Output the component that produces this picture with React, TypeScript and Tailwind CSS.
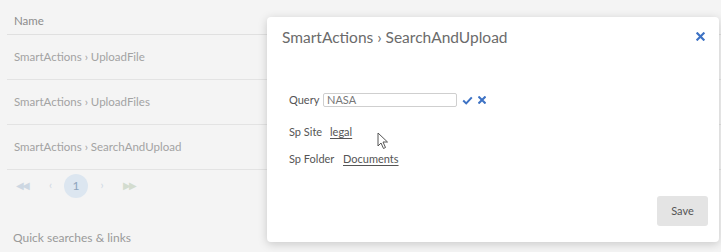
import React from "react";

function Row({ name }: { name: string }) {
  return (
    <div className="h-[45px] border-b border-[#e3e3e3] flex items-center pl-[7px] text-[11.5px] text-[#a3a3a3]">
      {name}
    </div>
  );
}

export default function App() {
  return (
    <div
      className="relative w-[721px] h-[252px] overflow-hidden bg-[#f4f4f4]"
      style={{ fontFamily: "Lato, 'Noto Sans', sans-serif" }}
    >
      {/* Background page */}
      <div className="pl-[7px] pr-0">
        <div className="h-[35px] border-b border-[#e0e0e0] flex items-end pb-[5px] pl-[7px] text-[11.5px] text-[#8c8c8c] relative">
          <span>Name</span>
          <span className="absolute left-[397px] top-[13px] text-[#8c8c8c]">Application</span>
        </div>
        <Row name="SmartActions › UploadFile" />
        <Row name="SmartActions › UploadFiles" />
        <Row name="SmartActions › SearchAndUpload" />
        <div className="flex items-center h-[31px] pl-[0px] text-[#cdd7e2]">
          <span className="w-[30px] text-center text-[10px] tracking-[-2px]">◀◀</span>
          <span className="w-[27px] text-center text-[11px]">‹</span>
          <span className="w-[24px] h-[24px] rounded-full bg-[#dce6f0] text-[#8ea4bd] text-[12px] flex items-center justify-center">1</span>
          <span className="w-[28px] text-center text-[11px]">›</span>
          <span className="w-[26px] text-center text-[10px] tracking-[-2px] text-[#d3dccf]">▶▶</span>
        </div>
        <div className="mt-[28px] pl-[6px] text-[12px] text-[#9a9a9a]">Quick searches &amp; links</div>
      </div>

      {/* Modal */}
      <div className="absolute left-[267px] top-[17px] w-[452px] h-[225px] bg-white rounded-[4px] shadow-[0_2px_10px_rgba(0,0,0,0.18)] flex flex-col">
        <div className="flex items-start justify-between pl-[15px] pr-[14px] pt-[9px]">
          <div className="text-[15.5px] text-[#6b6b6b]">SmartActions › SearchAndUpload</div>
          <svg width="9" height="9" viewBox="0 0 10 10" className="mt-[6px]">
            <path d="M1.5 1.5 L8.5 8.5 M8.5 1.5 L1.5 8.5" stroke="#3d72c4" strokeWidth="2.4" strokeLinecap="square" />
          </svg>
        </div>
        <div className="pl-[22px] mt-[44px] flex flex-col text-[11px] text-[#555]">
          <div className="flex items-center h-[14px]">
            <span className="w-[34px]">Query</span>
            <div className="w-[134px] h-[14px] border border-[#cfcfcf] rounded-[2px] flex items-center pl-[3px] text-[11px] text-[#777]">NASA</div>
            <svg width="11" height="9" viewBox="0 0 11 9" className="ml-[5px]">
              <path d="M1.2 4.6 L4.2 7.4 L9.8 1.4" stroke="#3d72c4" strokeWidth="2" fill="none" />
            </svg>
            <svg width="8" height="8" viewBox="0 0 10 10" className="ml-[5px]">
              <path d="M1.5 1.5 L8.5 8.5 M8.5 1.5 L1.5 8.5" stroke="#3d72c4" strokeWidth="2.6" strokeLinecap="square" />
            </svg>
          </div>
          <div className="flex items-center mt-[17px]">
            <span className="w-[41px]">Sp Site</span>
            <span className="underline underline-offset-2">legal</span>
          </div>
          <div className="flex items-center mt-[10px]">
            <span className="w-[54px]">Sp Folder</span>
            <span className="underline underline-offset-2">Documents</span>
          </div>
        </div>
        <div className="mt-auto mb-[16px] mr-[11px] self-end">
          <button className="w-[51px] h-[30px] rounded-[3px] bg-[#e4e4e4] text-[11px] text-[#555]">Save</button>
        </div>
      </div>

      {/* Mouse cursor */}
      <svg width="12" height="18" viewBox="0 0 12 18" className="absolute left-[377px] top-[132px]">
        <path d="M1 1 L1 14 L4 11 L6.5 16.5 L8.5 15.5 L6 10 L10.5 10 Z" fill="white" stroke="#555" strokeWidth="1" strokeLinejoin="round" />
      </svg>
    </div>
  );
}
